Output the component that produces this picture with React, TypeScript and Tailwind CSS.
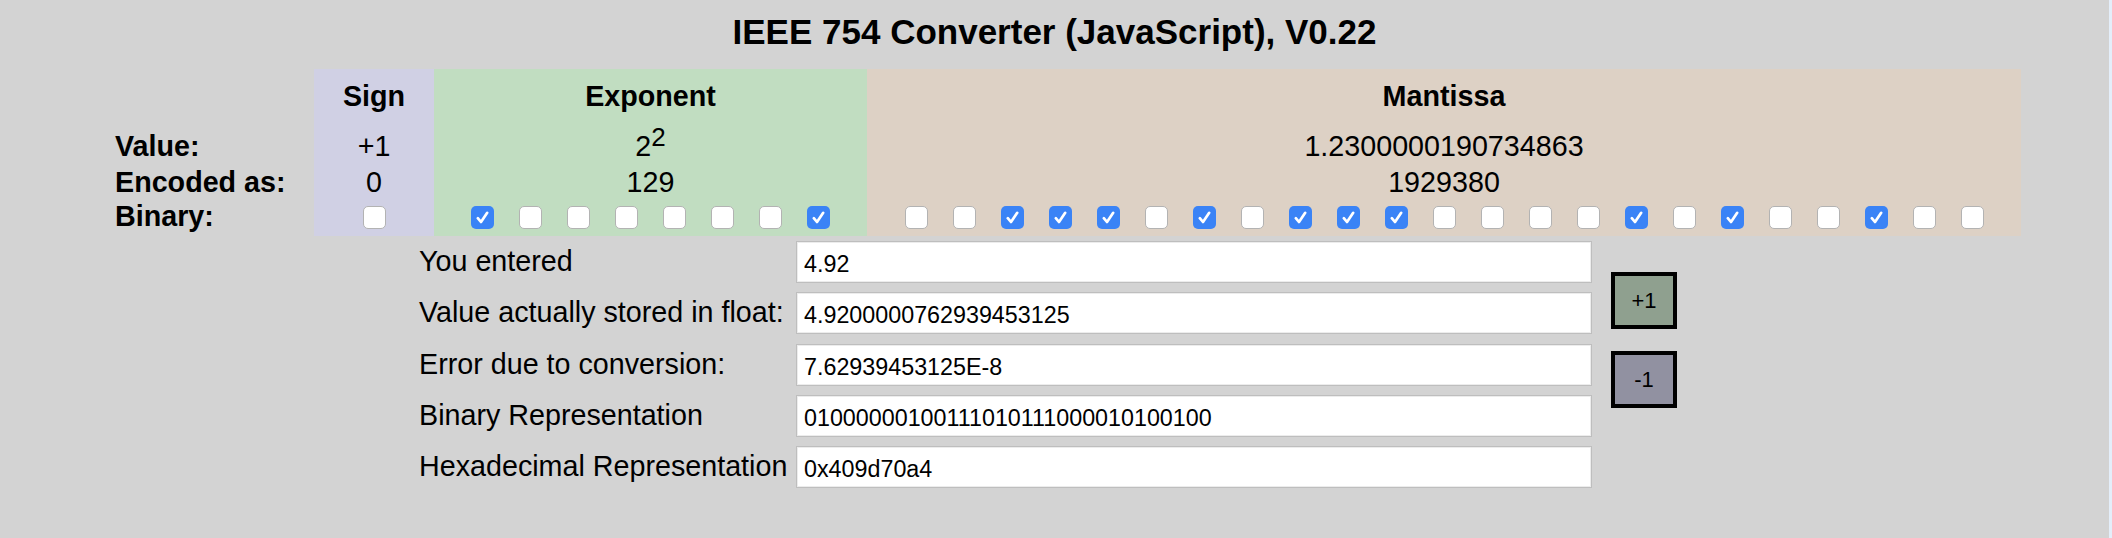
import React from "react";

const expBits = [1, 0, 0, 0, 0, 0, 0, 1];
const manBits = "00111010111000010100100".split("").map(Number);

function Box({ on }: { on: boolean }) {
  if (on) {
    return (
      <span className="flex h-[23px] w-[23px] shrink-0 items-center justify-center rounded-[5px] bg-[#3a83f6]">
        <svg viewBox="0 0 23 23" className="h-[23px] w-[23px]">
          <path
            d="M6.8 12.2 L10 16 L16.2 6.8"
            fill="none"
            stroke="white"
            strokeWidth="2.7"
            strokeLinecap="round"
            strokeLinejoin="round"
          />
        </svg>
      </span>
    );
  }
  return (
    <span className="block h-[23px] w-[23px] shrink-0 rounded-[5px] border border-[#b3b3b3] bg-white" />
  );
}

function Column({
  width,
  bg,
  header,
  value,
  encoded,
  bits,
}: {
  width: string;
  bg: string;
  header: string;
  value: React.ReactNode;
  encoded: string;
  bits: number[];
}) {
  return (
    <div className={`${width} ${bg} flex flex-col text-center`}>
      <div className="h-[49px] pt-[11px] font-bold">{header}</div>
      <div className="h-[48px] pt-[12px]">{value}</div>
      <div className="h-[34px]">{encoded}</div>
      <div className="flex h-[36px] justify-center gap-[25px] pt-[6px]">
        {bits.map((b, i) => (
          <Box key={i} on={b === 1} />
        ))}
      </div>
    </div>
  );
}

const rows: [string, string][] = [
  ["You entered", "4.92"],
  ["Value actually stored in float:", "4.9200000762939453125"],
  ["Error due to conversion:", "7.62939453125E-8"],
  ["Binary Representation", "01000000100111010111000010100100"],
  ["Hexadecimal Representation", "0x409d70a4"],
];

export default function App() {
  return (
    <div className="flex h-[538px] w-full bg-[#d3d3d3] font-['Liberation_Sans',Arial,sans-serif] text-black">
      <div className="flex-1">
        <h1 className="pt-[11px] text-center text-[35px] font-bold leading-[41px]">
          IEEE 754 Converter (JavaScript), V0.22
        </h1>

        <div className="ml-[114px] mt-[17px] flex text-[28.7px] leading-[32px]">
          <div className="flex w-[200px] flex-col pl-[1px] font-bold">
            <div className="h-[49px]" />
            <div className="h-[48px] pt-[12px]">Value:</div>
            <div className="h-[34px]">Encoded as:</div>
            <div className="h-[36px]">Binary:</div>
          </div>
          <Column
            width="w-[120px]"
            bg="bg-[#d0d0e4]"
            header="Sign"
            value="+1"
            encoded="0"
            bits={[0]}
          />
          <Column
            width="w-[433px]"
            bg="bg-[#c1ddc1]"
            header="Exponent"
            value={
              <span>
                2
                <sup className="relative -top-[10px] align-baseline text-[26px] leading-[0]">2</sup>
              </span>
            }
            encoded="129"
            bits={expBits}
          />
          <Column
            width="w-[1154px]"
            bg="bg-[#ddd1c5]"
            header="Mantissa"
            value="1.2300000190734863"
            encoded="1929380"
            bits={manBits}
          />
        </div>

        <div className="ml-[418px] mt-[5px] flex">
          <div className="flex flex-col gap-[9.25px]">
            {rows.map(([label, val]) => (
              <div key={label} className="flex h-[42px]">
                <div className="w-[378px] pl-[1px] text-[28.7px] leading-[41px]">{label}</div>
                <div className="flex h-[42px] w-[796px] items-center border border-[#bebebe] bg-white pl-[7px] pt-[5px] text-[23.3px] shadow-[inset_0_0_0_1px_#ececec]">
                  {val}
                </div>
              </div>
            ))}
          </div>
          <div className="ml-[19px] flex flex-col gap-[22px] pt-[31px]">
            <div className="flex h-[57px] w-[66px] items-center justify-center border-[4px] border-black bg-[#8fa08f] text-[22px]">
              +1
            </div>
            <div className="flex h-[57px] w-[66px] items-center justify-center border-[4px] border-black bg-[#9191a1] text-[22px]">
              -1
            </div>
          </div>
        </div>
      </div>
      <div className="w-[3px] bg-[#e4eefa]" />
    </div>
  );
}
